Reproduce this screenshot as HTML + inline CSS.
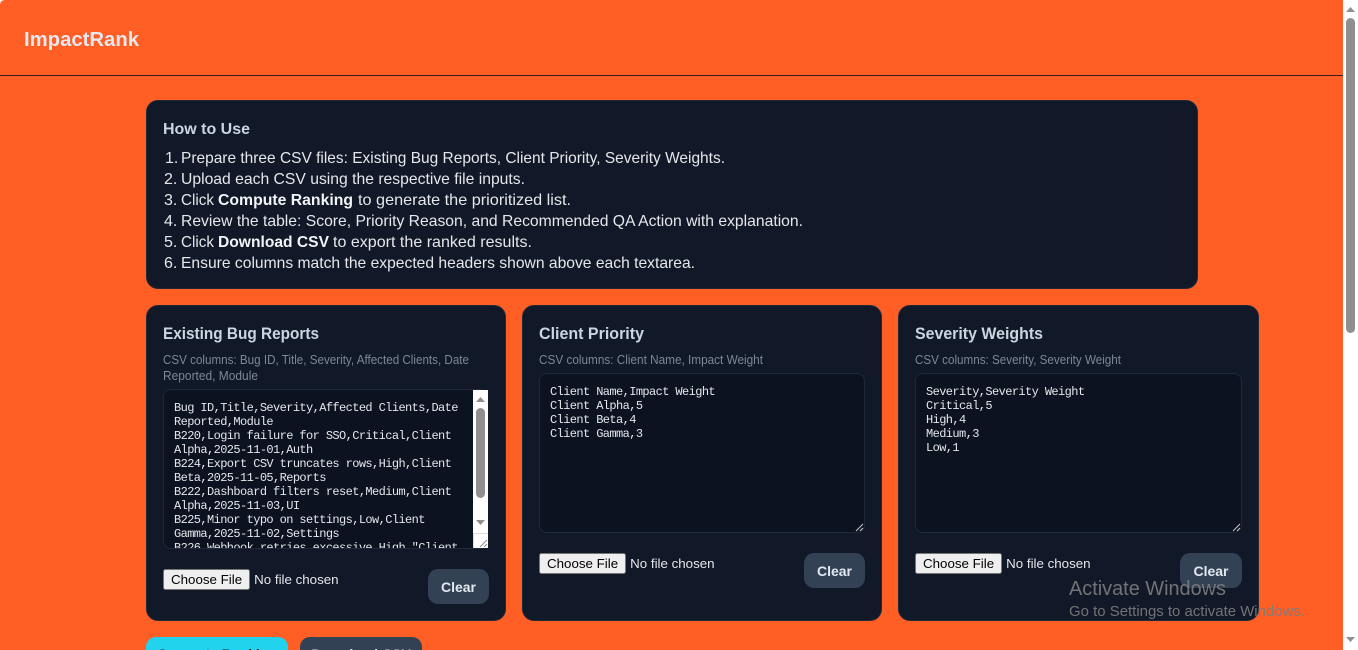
<!DOCTYPE html>
<html lang="en">
<head>
<meta charset="utf-8">
<title>ImpactRank</title>
<style>
html,body{margin:0;padding:0;width:1358px;height:650px;overflow:hidden;background:#ff5e25;}
body{position:relative;font-family:"Liberation Sans",sans-serif;}
.abs{position:absolute;box-sizing:border-box;}
.corner{left:0;top:0;width:4px;height:4px;background:radial-gradient(circle at 100% 100%,#ff5e25 3px,#fff 4.5px);}
.rule{left:0;top:75px;width:1343px;height:1px;background:#3a1f18;}
.card{background:#111827;border:1px solid #1f2937;border-radius:12px;}
.ta{background:#0b1220;border:1px solid #1f2937;border-radius:8px;overflow:hidden;}
.ta pre{position:absolute;margin:0;left:10px;top:11px;font:12px/14px "Liberation Mono",monospace;letter-spacing:-.6px;color:#e5e7eb;white-space:pre;}
.clear{width:61px;height:35px;background:#334155;border:0;border-radius:10px;color:#e2e8f0;font:bold 14px "Liberation Sans",sans-serif;padding:0;}
input[type=file]{position:absolute;width:240px;height:21px;color:#e5e7eb;font:13.33px "Liberation Sans",sans-serif;margin:0;padding:0;}
.sb{background:#fff;}
.thumb{background:#8f8f8f;border-radius:5px;}
svg.t{position:absolute;left:0;top:0;pointer-events:none;}
.btn{height:35px;border:0;border-radius:10px;font:bold 14px "Liberation Sans",sans-serif;padding:0 0 1px 0;}
</style>
</head>
<body>
<div class="abs corner"></div>
<div class="abs rule"></div>

<div class="abs card" style="left:146px;top:100px;width:1052px;height:189px"></div>

<div class="abs card" style="left:146px;top:305px;width:360px;height:316px"></div>
<div class="abs card" style="left:522px;top:305px;width:360px;height:316px"></div>
<div class="abs card" style="left:898px;top:305px;width:361px;height:316px"></div>

<div class="abs ta" style="left:163px;top:389px;width:325px;height:160px">
<pre>Bug ID,Title,Severity,Affected Clients,Date
Reported,Module
B220,Login failure for SSO,Critical,Client
Alpha,2025-11-01,Auth
B224,Export CSV truncates rows,High,Client
Beta,2025-11-05,Reports
B222,Dashboard filters reset,Medium,Client
Alpha,2025-11-03,UI
B225,Minor typo on settings,Low,Client
Gamma,2025-11-02,Settings
B226,Webhook retries excessive,High,"Client</pre>
</div>
<div class="abs sb" style="left:473px;top:390px;width:15px;height:158px"></div>
<div class="abs thumb" style="left:476px;top:408px;width:9px;height:90px"></div>
<div class="abs" style="left:473px;top:533px;width:15px;height:15px;background:#fff;border-top:1px solid #dcdcdc;border-left:1px solid #dcdcdc"></div>

<div class="abs ta" style="left:539px;top:373px;width:326px;height:160px">
<pre>Client Name,Impact Weight
Client Alpha,5
Client Beta,4
Client Gamma,3</pre>
</div>
<div class="abs ta" style="left:915px;top:373px;width:327px;height:160px">
<pre>Severity,Severity Weight
Critical,5
High,4
Medium,3
Low,1</pre>
</div>

<input type="file" style="left:163px;top:569px">
<input type="file" style="left:539px;top:553px">
<input type="file" style="left:915px;top:553px">

<button class="abs clear" style="left:428px;top:569px">Clear</button>
<button class="abs clear" style="left:804px;top:553px">Clear</button>
<button class="abs clear" style="left:1180px;top:553px;width:62px">Clear</button>

<button class="abs btn" style="left:146px;top:637px;width:142px;background:#22d3ee;color:#0b1220">Compute Ranking</button>
<button class="abs btn" style="left:300px;top:637px;width:122px;background:#334155;color:#e2e8f0">Download CSV</button>

<div class="abs sb" style="left:1343px;top:0;width:15px;height:650px"></div>
<div class="abs thumb" style="left:1346px;top:18px;width:9px;height:315px"></div>

<svg class="t" width="1358" height="650" viewBox="0 0 1358 650" font-family="'Liberation Sans',sans-serif">
  <!-- scrollbar arrows -->
  <path d="M1350.5 7l4.5 5h-9z" fill="#8f8f8f"/>
  <path d="M1350.5 642l4.5-5h-9z" fill="#8f8f8f"/>
  <path d="M480.5 397l4.5 5h-9z" fill="#8f8f8f"/>
  <path d="M480.5 525l4.5-5h-9z" fill="#8f8f8f"/>
  <!-- resize grips -->
  <path d="M480 547l7-7M484 547l3-3" stroke="#8a8a8a" stroke-width="1" fill="none"/>
  <path d="M856 531l7-7M860 531l3-3" stroke="#c8c8c8" stroke-width="1" fill="none"/>
  <path d="M1233 531l7-7M1237 531l3-3" stroke="#c8c8c8" stroke-width="1" fill="none"/>

  <text x="24" y="46" font-size="20" font-weight="700" fill="#e8e8ee" textLength="115" lengthAdjust="spacingAndGlyphs">ImpactRank</text>

  <text x="163" y="134" font-size="16" font-weight="700" fill="#cbd5e1" textLength="87" lengthAdjust="spacingAndGlyphs">How to Use</text>

  <g font-size="16" fill="#e5e7eb">
    <text x="165" y="163">1.</text><text x="181" y="163" textLength="544" lengthAdjust="spacingAndGlyphs">Prepare three CSV files: Existing Bug Reports, Client Priority, Severity Weights.</text>
    <text x="164" y="184">2.</text><text x="181" y="184" textLength="344" lengthAdjust="spacingAndGlyphs">Upload each CSV using the respective file inputs.</text>
    <text x="164" y="205">3.</text><text x="181" y="205" textLength="33" lengthAdjust="spacingAndGlyphs">Click</text>
    <text x="218" y="205" font-weight="700" fill="#f1f5f9" textLength="135" lengthAdjust="spacingAndGlyphs">Compute Ranking</text>
    <text x="358" y="205" textLength="213" lengthAdjust="spacingAndGlyphs">to generate the prioritized list.</text>
    <text x="164" y="226">4.</text><text x="181" y="226" textLength="622" lengthAdjust="spacingAndGlyphs">Review the table: Score, Priority Reason, and Recommended QA Action with explanation.</text>
    <text x="164" y="247">5.</text><text x="181" y="247" textLength="33" lengthAdjust="spacingAndGlyphs">Click</text>
    <text x="218" y="247" font-weight="700" fill="#f1f5f9" textLength="111" lengthAdjust="spacingAndGlyphs">Download CSV</text>
    <text x="333" y="247" textLength="199" lengthAdjust="spacingAndGlyphs">to export the ranked results.</text>
    <text x="164" y="268">6.</text><text x="181" y="268" textLength="514" lengthAdjust="spacingAndGlyphs">Ensure columns match the expected headers shown above each textarea.</text>
  </g>

  <g font-size="17" font-weight="700" fill="#cbd5e1">
    <text x="163" y="339" textLength="156" lengthAdjust="spacingAndGlyphs">Existing Bug Reports</text>
    <text x="539" y="339" textLength="105" lengthAdjust="spacingAndGlyphs">Client Priority</text>
    <text x="915" y="339" textLength="128" lengthAdjust="spacingAndGlyphs">Severity Weights</text>
  </g>

  <g font-size="12.5" fill="#7c8798">
    <text x="163" y="364" textLength="306" lengthAdjust="spacingAndGlyphs">CSV columns: Bug ID, Title, Severity, Affected Clients, Date</text>
    <text x="163" y="380" textLength="95" lengthAdjust="spacingAndGlyphs">Reported, Module</text>
    <text x="539" y="364" textLength="224" lengthAdjust="spacingAndGlyphs">CSV columns: Client Name, Impact Weight</text>
    <text x="915" y="364" textLength="206" lengthAdjust="spacingAndGlyphs">CSV columns: Severity, Severity Weight</text>
  </g>

  <text x="1069" y="595" font-size="20" fill="#7c7c7c" fill-opacity=".92" textLength="157" lengthAdjust="spacingAndGlyphs">Activate Windows</text>
  <text x="1069" y="616" font-size="15" fill="#7c7c7c" fill-opacity=".92" textLength="236" lengthAdjust="spacingAndGlyphs">Go to Settings to activate Windows.</text>
</svg>
</body>
</html>
